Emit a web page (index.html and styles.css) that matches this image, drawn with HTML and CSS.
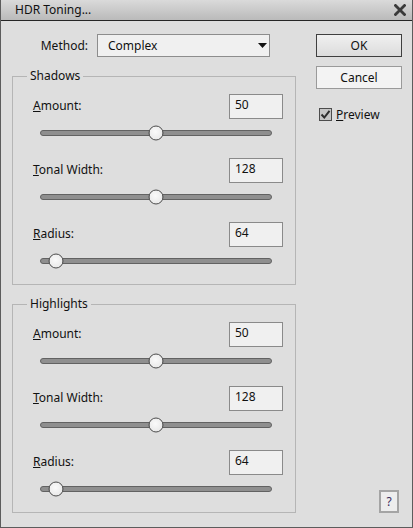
FILE: index.html
```html
<!DOCTYPE html>
<html>
<head>
<meta charset="utf-8">
<link rel="stylesheet" href="styles.css">
</head>
<body>
<div class="window">
  <div class="titlebar">
    <span class="title">HDR Toning...</span>
    <svg class="close" width="12" height="12" viewBox="0 0 12 12"><path d="M1.5 1.5 L10.5 10.5 M10.5 1.5 L1.5 10.5" stroke="#3a3a3a" stroke-width="2.8" stroke-linecap="square"/></svg>
  </div>
  <div class="body">
    <div class="main">
      <div class="method-row">
        <span class="method-label">Method:</span>
        <div class="select">
          <span class="select-text">Complex</span>
          <svg class="arrow" width="9" height="5" viewBox="0 0 9 5"><path d="M0 0 H9 L4.5 5 Z" fill="#111"/></svg>
        </div>
      </div>

      <fieldset class="group">
        <legend class="legend">Shadows</legend>
        <div class="fields">
          <div class="field">
            <div class="field-head"><span class="label"><u>A</u>mount:</span><div class="num">50</div></div>
            <div class="slider"><div class="track"></div><div class="thumb" style="left:50%"></div></div>
          </div>
          <div class="field">
            <div class="field-head"><span class="label"><u>T</u>onal Width:</span><div class="num">128</div></div>
            <div class="slider"><div class="track"></div><div class="thumb" style="left:50%"></div></div>
          </div>
          <div class="field">
            <div class="field-head"><span class="label"><u>R</u>adius:</span><div class="num">64</div></div>
            <div class="slider"><div class="track"></div><div class="thumb" style="left:6.7%"></div></div>
          </div>
        </div>
      </fieldset>

      <fieldset class="group">
        <legend class="legend">Highlights</legend>
        <div class="fields">
          <div class="field">
            <div class="field-head"><span class="label"><u>A</u>mount:</span><div class="num">50</div></div>
            <div class="slider"><div class="track"></div><div class="thumb" style="left:50%"></div></div>
          </div>
          <div class="field">
            <div class="field-head"><span class="label"><u>T</u>onal Width:</span><div class="num">128</div></div>
            <div class="slider"><div class="track"></div><div class="thumb" style="left:50%"></div></div>
          </div>
          <div class="field">
            <div class="field-head"><span class="label"><u>R</u>adius:</span><div class="num">64</div></div>
            <div class="slider"><div class="track"></div><div class="thumb" style="left:6.7%"></div></div>
          </div>
        </div>
      </fieldset>
    </div>

    <div class="side">
      <div class="btn btn-default">OK</div>
      <div class="btn btn-cancel">Cancel</div>
      <div class="check">
        <span class="box"><svg width="11" height="11" viewBox="0 0 11 11"><path d="M1.5 5.5 L4.3 8.5 L9.5 1.8" fill="none" stroke="#2e2e2e" stroke-width="2"/></svg></span>
        <span class="check-text"><u>P</u>review</span>
      </div>
      <div class="help">?</div>
    </div>
  </div>
</div>
</body>
</html>
```

FILE: styles.css
```css
* { box-sizing: border-box; }
html, body { margin: 0; padding: 0; }
body {
  font-family: "Noto Sans", "Open Sans", sans-serif;
  font-size: 12px;
  line-height: 16px;
  color: #111;
  background: #dedede;
}
.window {
  width: 413px;
  height: 528px;
  display: flex;
  flex-direction: column;
  background: #dedede;
  border-left: 1px solid #5c5c5c;
  border-right: 1px solid #5c5c5c;
  border-bottom: 1px solid #5c5c5c;
}
.titlebar {
  height: 21px;
  flex: none;
  display: flex;
  align-items: center;
  justify-content: space-between;
  padding: 0 6px 1px 14px;
  background: linear-gradient(#dadada, #bababa);
  border-bottom: 1px solid #262626;
}
.title { font-size: 12px; color: #111; }
.close { display: block; margin-top: 1px; }
.body {
  flex: 1;
  display: flex;
}
.main {
  width: 284px;
  margin-left: 11px;
  padding-top: 13px;
}
.method-row {
  height: 23px;
  display: flex;
  align-items: center;
}
.method-label {
  width: 76px;
  text-align: right;
}
.select {
  margin-left: 9px;
  width: 173px;
  height: 23px;
  display: flex;
  align-items: center;
  justify-content: space-between;
  padding: 0 2px 0 10px;
  background: #f0f0f0;
  border: 1px solid #8d8d8d;
}
.select-text { margin-top: 1px; }
.arrow { display: block; margin-right: 0; }

.group {
  margin: 11px 0 0;
  padding: 10px 12px 15px 0;
  border: 1px solid #b5b5b5;
  min-width: 0;
}
.legend {
  margin-left: 14px;
  padding: 0 3px;
  line-height: 16px;
}
.fields {
  display: flex;
  flex-direction: column;
  gap: 17px;
  padding-left: 20px;
}
.field-head {
  height: 25px;
  display: flex;
  align-items: center;
  justify-content: space-between;
}
.label { margin-top: -1px; }
.num {
  width: 54px;
  height: 25px;
  padding: 2px 0 0 5px;
  background: #f0f0f0;
  border: 1px solid #8a8a8a;
}
.slider {
  position: relative;
  margin: 6px 11px 0 7px;
  height: 16px;
  display: flex;
  align-items: center;
}
.track {
  width: 100%;
  height: 6px;
  border: 1px solid #626262;
  border-radius: 3px;
  background: #8f8f8f;
}
.thumb {
  position: absolute;
  top: 50%;
  width: 15px;
  height: 15px;
  transform: translate(-50%, -50%);
  border: 1px solid #4e4e4e;
  border-radius: 50%;
  background: radial-gradient(circle at 45% 40%, #fafafa, #e4e4e4);
}

.side {
  flex: 1;
  display: flex;
  flex-direction: column;
  padding-top: 13px;
  padding-left: 20px;
}
.btn {
  width: 86px;
  height: 23px;
  display: flex;
  align-items: center;
  justify-content: center;
  text-align: center;
}
.btn-default {
  border: 1px solid #3f3f3f;
  background: linear-gradient(#f0f0f0, #dcdcdc);
}
.btn-cancel {
  margin-top: 9px;
  border: 1px solid #9a9a9a;
  background: #f3f3f3;
}
.check {
  margin-top: 19px;
  margin-left: 3px;
  display: flex;
  align-items: center;
  height: 13px;
}
.box {
  width: 13px;
  height: 13px;
  border: 1px solid #4c4c4c;
  background: #c6c6c6;
  display: flex;
  align-items: center;
  justify-content: center;
}
.box svg { display: block; }
.check-text { margin-left: 4px; }
.help {
  margin-top: auto;
  margin-bottom: 14px;
  margin-right: 13px;
  align-self: flex-end;
  width: 20px;
  height: 23px;
  border: 2px solid #a4a4a4;
  background: #ededed;
  display: flex;
  align-items: center;
  justify-content: center;
  color: #3a2a5a;
}
```
